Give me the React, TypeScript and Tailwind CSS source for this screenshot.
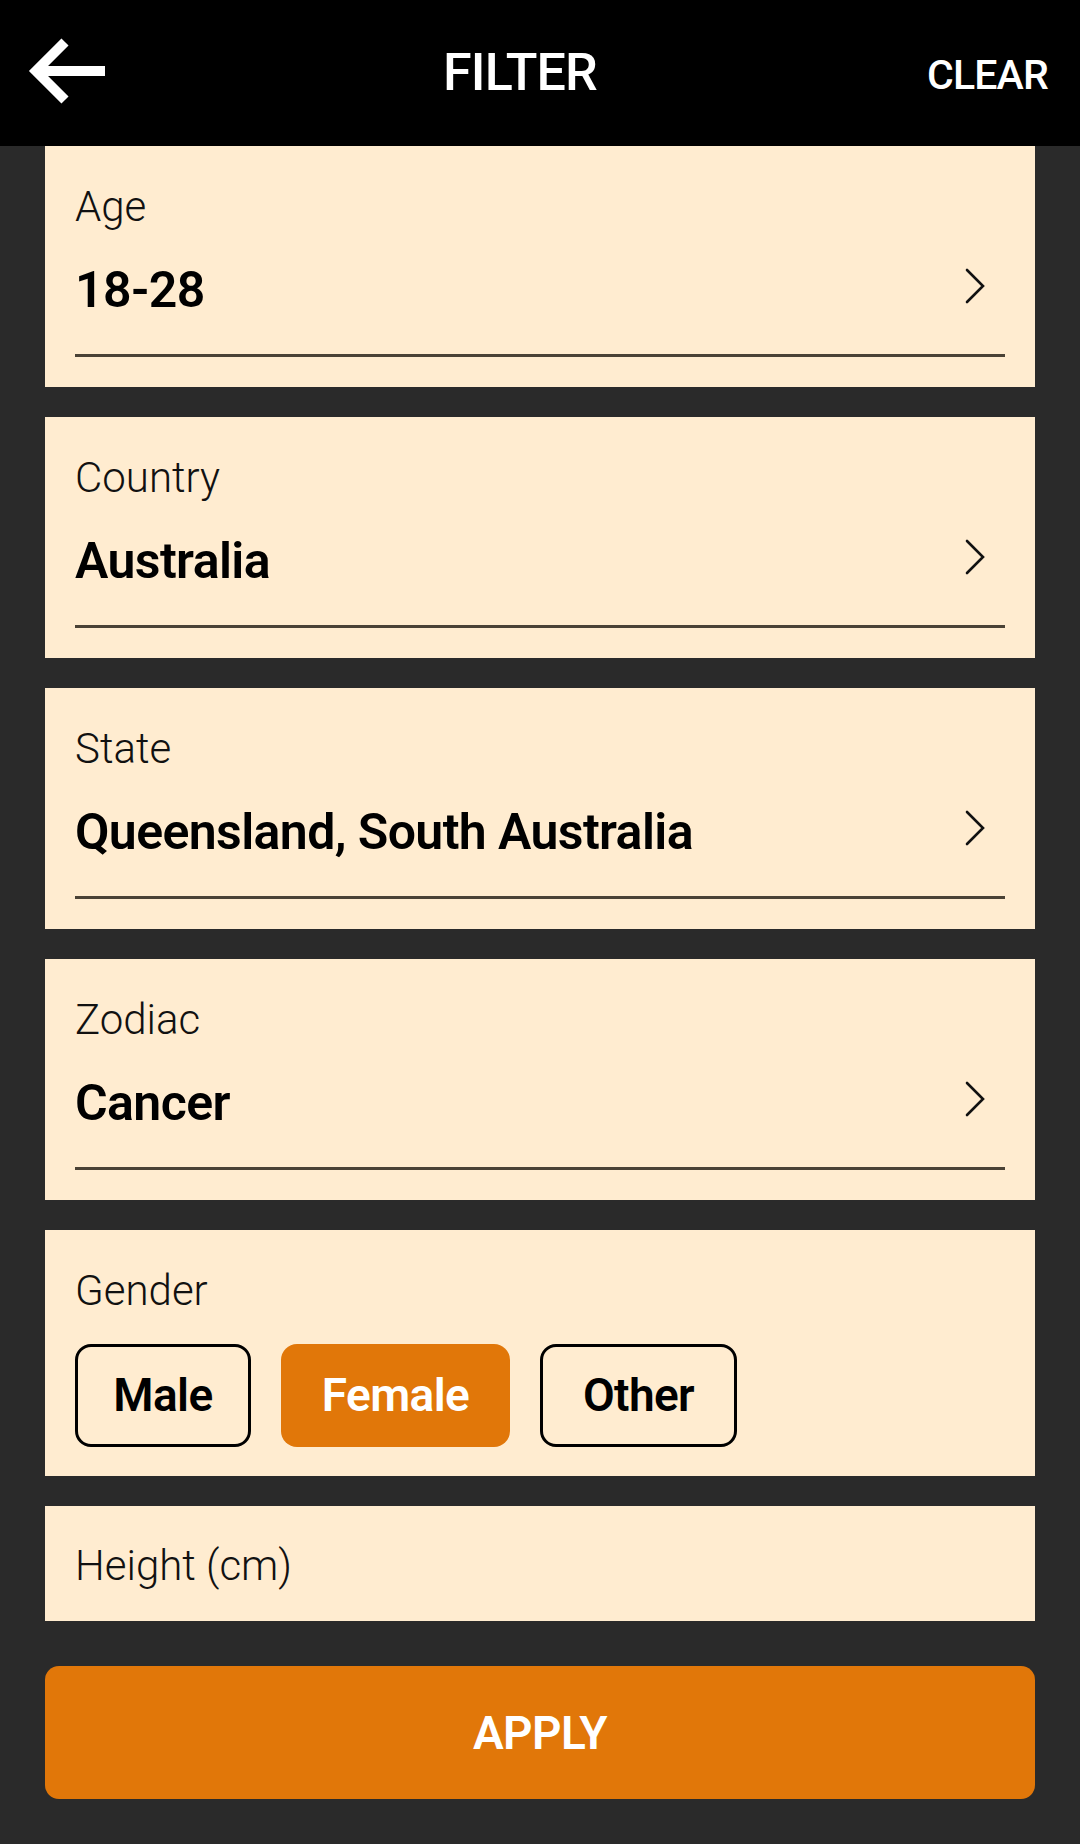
import React from "react";

const font = { fontFamily: "Roboto, 'Noto Sans', sans-serif" };

function Chevron() {
  return (
    <svg width="22" height="36" viewBox="0 0 22 36" className="mr-[19px] mb-[8px] shrink-0">
      <polyline points="3,2 19,18 3,34" fill="none" stroke="#111" strokeWidth="2.6" strokeLinecap="round" strokeLinejoin="miter" />
    </svg>
  );
}

function SelectCard({ label, value }: { label: string; value: string }) {
  return (
    <div className="h-[241px] bg-[#FFECD0] px-[30px] pt-[40px] flex flex-col">
      <div className="text-[42px] leading-[42px] font-light text-[#111]">{label}</div>
      <div className="mt-[37px] h-[50px] flex items-center justify-between">
        <div className="text-[50px] leading-[50px] font-semibold text-black tracking-[-0.6px]">{value}</div>
        <Chevron />
      </div>
      <div className="mt-[39px] h-[3px] bg-[#4a4236]" />
    </div>
  );
}

function GenderButton({ label, active, w }: { label: string; active?: boolean; w: string }) {
  return (
    <div
      className={
        "h-[103px] rounded-[16px] flex items-center justify-center text-[46px] leading-[46px] font-semibold tracking-[-0.6px] " +
        w +
        (active ? " bg-[#E17709] text-white" : " border-[3px] border-black text-black")
      }
    >
      {label}
    </div>
  );
}

export default function App() {
  return (
    <div style={font} className="w-[1080px] h-[1844px] bg-[#2a2a2a] flex flex-col overflow-hidden">
      <div className="h-[146px] bg-black flex items-center shrink-0">
        <div className="w-[140px] pl-[24px] flex items-center">
          <svg width="84" height="72" viewBox="0 0 84 72" className="-mt-[4px]">
            <polyline points="41,7 12,36 41,65" fill="none" stroke="#fff" strokeWidth="10" strokeLinecap="butt" strokeLinejoin="miter" />
            <line x1="14" y1="36" x2="81" y2="36" stroke="#fff" strokeWidth="10" />
          </svg>
        </div>
        <div className="flex-1 text-center text-white text-[52px] leading-[52px] font-medium tracking-[-0.8px]">FILTER</div>
        <div className="w-[180px] pr-[32px] text-right text-white text-[41px] leading-[41px] font-medium tracking-[-0.8px] mt-[4px]">CLEAR</div>
      </div>
      <div className="px-[45px] flex flex-col gap-[30px]">
        <SelectCard label="Age" value="18-28" />
        <SelectCard label="Country" value="Australia" />
        <SelectCard label="State" value="Queensland, South Australia" />
        <SelectCard label="Zodiac" value="Cancer" />
        <div className="h-[246px] bg-[#FFECD0] px-[30px] pt-[40px] flex flex-col">
          <div className="text-[42px] leading-[42px] font-light text-[#111]">Gender</div>
          <div className="mt-[31.5px] flex gap-[30px]">
            <GenderButton label="Male" w="w-[176px]" />
            <GenderButton label="Female" w="w-[229px]" active />
            <GenderButton label="Other" w="w-[197px]" />
          </div>
        </div>
        <div className="h-[115px] bg-[#FFECD0] px-[30px] pt-[39px]">
          <div className="text-[42px] leading-[42px] font-light text-[#111]">Height (cm)</div>
        </div>
        <div className="mt-[15px] h-[133px] rounded-[14px] bg-[#E17709] flex items-center justify-center text-white text-[46px] leading-[46px] font-semibold tracking-[-0.6px]">
          APPLY
        </div>
      </div>
    </div>
  );
}
